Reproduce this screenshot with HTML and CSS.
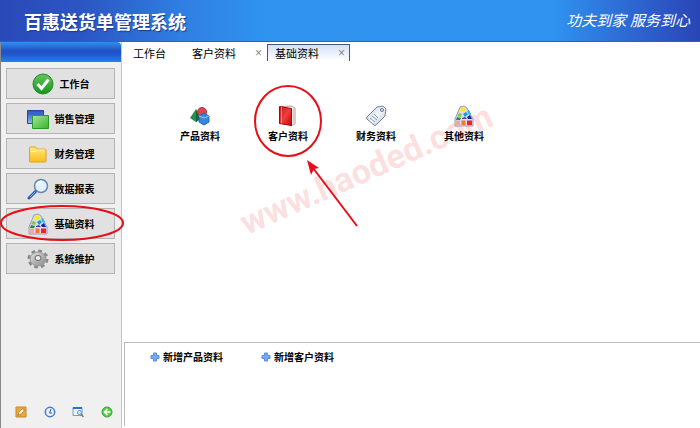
FILE: index.html
```html
<!DOCTYPE html>
<html lang="zh-CN">
<head>
    <meta charset="UTF-8">
    <meta name="viewport" content="width=device-width, initial-scale=1.0">
    <title>百惠送货单管理系统</title>
    <link rel="stylesheet" href="styles.css">
</head>
<body>
    <!-- shared gradients and icons -->
    <svg class="defs" width="0" height="0" aria-hidden="true">
        <defs>
            <linearGradient id="green" x1="0" y1="0" x2="0" y2="1"><stop offset="0" stop-color="#5fc95a"/><stop offset="1" stop-color="#159519"/></linearGradient>
            <linearGradient id="lime" x1="0" y1="0" x2="1" y2="1"><stop offset="0" stop-color="#a7e69b"/><stop offset="1" stop-color="#34b42c"/></linearGradient>
            <linearGradient id="blue" x1="0" y1="0" x2="0" y2="1"><stop offset="0" stop-color="#2b50b8"/><stop offset="1" stop-color="#8db9f5"/></linearGradient>
            <linearGradient id="yellow" x1="0" y1="0" x2="0" y2="1"><stop offset="0" stop-color="#ffe880"/><stop offset="1" stop-color="#f8bd1c"/></linearGradient>
            <linearGradient id="red" x1="0" y1="0" x2="1" y2="1"><stop offset="0" stop-color="#d3141a"/><stop offset="0.5" stop-color="#ec3f3f"/><stop offset="1" stop-color="#c50005"/></linearGradient>
            <linearGradient id="steel" x1="0" y1="0" x2="1" y2="1"><stop offset="0" stop-color="#b3c3dc"/><stop offset="0.5" stop-color="#f3f7fc"/><stop offset="1" stop-color="#aebdd2"/></linearGradient>
            <linearGradient id="gray" x1="0" y1="0" x2="1" y2="1"><stop offset="0" stop-color="#e2e2e2"/><stop offset="1" stop-color="#888"/></linearGradient>
            <symbol id="palette" viewBox="0 0 22 22">
                <path d="M7 2 11 1l3 2 6 11v7H2v-7z" fill="#d8dcef" stroke="#9a9dba"/>
                <path d="M8 3l3-1 2 3-2 2-4-1z" fill="#f8ec15"/>
                <path d="M6 8l3 1-1 3-4-1z" fill="#8ac83a"/>
                <path d="M10 9l3-2 2 2-3 3z" fill="#1897da"/>
                <path d="M14 6l2-1 2 4-2 1z" fill="#2ac4c9"/>
                <path d="M4 12l4 1-1 2H3z" fill="#16944a"/>
                <path d="M9 13l3-1 2 2H9z" fill="#6135b3"/>
                <path d="M14 12l3-2 2 4h-4z" fill="#1526a0"/>
                <path d="M3 15.500h4V20H3z" fill="#f6a78c"/>
                <path d="M8.500 15.500h4V20h-4z" fill="#f47a22"/>
                <path d="M14 15.500h5V20h-5z" fill="#f02519"/>
            </symbol>
            <symbol id="plus" viewBox="0 0 10 10">
                <path d="M3.500 1h3v2.500H9v3H6.500V9h-3V6.500H1v-3h2.500z" fill="#75a9f2" stroke="#5a8bdc"/>
            </symbol>
        </defs>
    </svg>

    <header class="header">
        <h1>百惠送货单管理系统</h1>
        <p class="slogan">功夫到家 服务到心</p>
    </header>

    <div class="layout">
        <aside class="sidebar">
            <div class="sidebar-top"></div>
            <nav class="menu">
                <button type="button">
                    <svg class="icon" viewBox="0 0 22 22"><circle cx="11" cy="11" r="10" fill="url(#green)" stroke="#23882a"/><path d="M5.500 11l4 4.500 7-9" fill="none" stroke="#fff" stroke-width="3"/></svg>
                    工作台
                </button>
                <button type="button">
                    <svg class="icon" viewBox="0 0 22 22"><path d="M.5 2.500h16v13H.5z" fill="url(#blue)" stroke="#2545a5"/><path d="M2 4h13v3H2z" fill="#3865cc"/><path d="M5.500 7.500h16v13h-16z" fill="url(#lime)" stroke="#289a27"/></svg>
                    销售管理
                </button>
                <button type="button">
                    <svg class="icon" viewBox="0 0 22 22"><path d="M2.500 18V5q0-1 1-1h5l2 2h7q1.500 0 1.500 1v11q0 1-1 1H3.500q-1 0-1-1z" fill="url(#yellow)" stroke="#e0a21a"/><path d="M4 8.500h5l2-1.500h7" fill="none" stroke="#fff3ad"/></svg>
                    财务管理
                </button>
                <button type="button">
                    <svg class="icon" viewBox="0 0 22 22"><path d="M9 13l-7 7" stroke="#315fab" stroke-width="3" stroke-linecap="round"/><path d="M8 14l-5 5" stroke="#7db1ed"/><circle cx="14" cy="8" r="6.500" fill="#e3f1ff" stroke="#6487b5" stroke-width="1.500"/><path d="M10 7q1-4 5-3" fill="none" stroke="#fff" stroke-width="2"/></svg>
                    数据报表
                </button>
                <button type="button">
                    <svg class="icon"><use href="#palette"/></svg>
                    基础资料
                </button>
                <button type="button">
                    <svg class="icon" viewBox="0 0 22 22"><ellipse cx="11" cy="11" rx="9" ry="8" fill="none" stroke="#888" stroke-width="3" stroke-dasharray="3.700 2.975"/><ellipse cx="11" cy="11" rx="8" ry="7" fill="url(#gray)" stroke="#999"/><ellipse cx="11" cy="10" rx="3" ry="2.500" fill="#eee" stroke="#666"/></svg>
                    系统维护
                </button>
            </nav>
            <div class="tools">
                <button type="button" aria-label="编辑"><svg viewBox="0 0 12 12"><path d="M1 1h10v10H1z" fill="#e8a83d" stroke="#c98824"/><path d="M3 9.500 4 6l3-3h2v2L6 8z" fill="#fff0c9" stroke="#a46a12" stroke-width=".6"/></svg></button>
                <button type="button" aria-label="时间"><svg viewBox="0 0 12 12"><circle cx="6" cy="6" r="4.700" fill="#e7f0ff" stroke="#477acb" stroke-width="1.500"/><path d="M7 3 5.500 7H8" fill="none" stroke="#315fb8"/></svg></button>
                <button type="button" aria-label="查找"><svg viewBox="0 0 12 12"><path d="M1 1.500h9v8H1z" fill="#eaf3ff" stroke="#6f9ee0"/><path d="M1 1h9v2H1z" fill="#326fc6"/><circle cx="7.500" cy="6.500" r="2" fill="#d4e9ff" stroke="#6b91c5"/><path d="M9 8l2.500 3" stroke="#92793f" stroke-width="1.500"/></svg></button>
                <button type="button" aria-label="返回"><svg viewBox="0 0 12 12"><circle cx="6" cy="6" r="5" fill="#56cb45" stroke="#34a52d"/><path d="M9.500 6H4M6.500 3l-3 3 3 3" fill="none" stroke="#fff" stroke-width="1.700"/></svg></button>
            </div>
        </aside>

        <main class="main">
            <div class="tabs">
                <div class="tab tab-home"><a href="#">工作台</a></div>
                <div class="tab"><a href="#">客户资料</a><button type="button" class="close" aria-label="关闭">×</button></div>
                <div class="tab active"><a href="#">基础资料</a><button type="button" class="close" aria-label="关闭">×</button></div>
            </div>

            <div class="tiles">
                <a href="#">
                    <svg class="icon" viewBox="0 0 22 22"><circle cx="13" cy="7" r="4.500" fill="#dc4650" stroke="#b92e3a"/><path d="M7 4 1 13l6 4 4-3z" fill="#21924c"/><path d="M7 4v13l4-3z" fill="#126835"/><path d="M10 11l5-3 5 3v6l-5 3-5-3z" fill="#3487dc" stroke="#2467b8"/><path d="M10 11l5 2 5-2" fill="none" stroke="#9acbfa"/></svg>
                    产品资料
                </a>
                <a href="#">
                    <svg class="icon" viewBox="0 0 22 22"><path d="M4 1.500l10-.5 4 2v16l-4 2z" fill="#f8f4f4" stroke="#b99"/><path d="M16.500 4v14" stroke="#c9b8b8" stroke-width=".7"/><path d="M2.500 1.500l12 2v17l-12-2z" fill="url(#red)" stroke="#af0007"/><path d="M4.500 2v16.500" stroke="#f08a85"/></svg>
                    客户资料
                </a>
                <a href="#">
                    <svg class="icon" viewBox="0 0 22 22"><path d="M2 12 12 2l6-1 3 3-1 7-9 9q-1 1-2 0l-7-6q-1-1 0-2z" fill="url(#steel)" stroke="#71829c"/><circle cx="17" cy="5" r="1.500" fill="#fff" stroke="#586a86"/><path d="M5 13l5 4M7 11l5 4M9 9l4 4" stroke="#8595ad"/></svg>
                    财务资料
                </a>
                <a href="#">
                    <svg class="icon"><use href="#palette"/></svg>
                    其他资料
                </a>
            </div>

            <div class="shortcuts">
                <a href="#"><svg><use href="#plus"/></svg>新增产品资料</a>
                <a href="#"><svg><use href="#plus"/></svg>新增客户资料</a>
            </div>
        </main>
    </div>

    <div class="watermark">www.haoded.com</div>
    <svg class="marks" width="400" height="250" viewBox="0 0 400 250" aria-hidden="true">
        <g fill="none" stroke="#e60f18" stroke-width="2">
            <ellipse cx="62" cy="223" rx="61" ry="17"/>
            <ellipse cx="288" cy="121" rx="33" ry="35"/>
            <path d="M357 226 313 168"/>
        </g>
        <path d="M307 160l12 8-5 1-3 6z" fill="#e60f18"/>
    </svg>
</body>
</html>
```

FILE: styles.css
```css
* {
    box-sizing: border-box;
}
body {
    position: relative;
    z-index: 0;
    display: flex;
    flex-direction: column;
    min-height: 100vh;
    margin: 0;
    background-color: #fff;
    color: #000;
    font-family: "Noto Sans CJK SC", sans-serif;
    font-size: 10px;
    line-height: 14px;
}
a {
    color: inherit;
    text-decoration: none;
}
button {
    padding: 0;
    border: none;
    background: none;
    color: inherit;
    font: inherit;
    cursor: pointer;
}
.defs {
    position: absolute;
}
.header {
    display: flex;
    align-items: center;
    justify-content: space-between;
    height: 42px;
    padding: 0 10px 0 24px;
    border-bottom: 1px solid #1d62d8;
    background: linear-gradient(to right, #2a49b8 0%, #2c56c4 12%, #2f7fe2 26%, #3093f0 38%, #3093f0 79%, #2d64d0 91%, #2a45b5 100%);
    color: #fff;
}
.header h1 {
    margin: 0;
    font-size: 18px;
    line-height: 24px;
    text-shadow: 1px 1px 1px #1c3a94;
}
.slogan {
    margin: 0;
    font-family: "Liberation Serif", "Noto Sans CJK SC", serif;
    font-size: 15px;
    font-style: italic;
    line-height: 20px;
}
.layout {
    display: flex;
    flex: 1;
}
.sidebar {
    display: flex;
    flex-direction: column;
    width: 122px;
    border-left: 1px solid #888;
    border-right: 1px solid #a9cdf0;
    background-color: #f0f0f0;
}
.sidebar-top {
    height: 20px;
    border-top-right-radius: 4px;
    background: linear-gradient(#2f8ff0, #2350c5 45%, #2254ca 60%, #1b86f3);
}
.menu {
    display: flex;
    flex-direction: column;
    gap: 4px;
    padding: 6px 6px 0 5px;
}
.menu button {
    display: flex;
    align-items: center;
    justify-content: center;
    gap: 6px;
    height: 31px;
    border: 1px solid #b4b4b4;
    background-color: #e1e1e1;
    font-weight: bold;
}
.icon {
    width: 22px;
    height: 22px;
}
.tools {
    display: flex;
    justify-content: space-between;
    margin-top: auto;
    padding: 0 8px 10px 14px;
}
.tools button,
.tools svg {
    display: block;
    width: 12px;
    height: 12px;
}
.main {
    display: flex;
    flex: 1;
    flex-direction: column;
    padding-left: 2px;
}
.tabs {
    display: flex;
    padding-top: 2px;
    font-size: 11px;
}
.tab {
    display: flex;
    align-items: center;
    justify-content: space-between;
    width: 83px;
    height: 17px;
    padding: 0 4px 0 7px;
    border: 1px solid transparent;
    border-bottom: none;
}
.tab-home {
    width: 60px;
    padding-left: 8px;
}
.tab.active {
    border-color: #4d5566;
    background: linear-gradient(#d5e0f6, #fff);
}
.close {
    color: #888;
    font-family: "Liberation Sans", sans-serif;
    font-size: 12px;
}
.tiles {
    display: flex;
    flex: 1;
    padding: 44px 0 0 32px;
}
.tiles a {
    display: flex;
    flex-direction: column;
    align-items: center;
    gap: 2px;
    width: 88px;
    height: 38px;
    font-weight: bold;
}
.shortcuts {
    display: flex;
    gap: 38px;
    height: 84px;
    margin-bottom: 2px;
    padding: 6px 0 0 25px;
    border-top: 1px solid #bbb;
    border-left: 1px solid #bbb;
}
.shortcuts a {
    display: flex;
    align-items: center;
    gap: 3px;
    height: 16px;
    font-weight: bold;
}
.shortcuts svg {
    width: 10px;
    height: 10px;
}
.watermark {
    position: absolute;
    z-index: -1;
    top: 148px;
    left: 230px;
    color: rgba(240, 60, 60, 0.18);
    font-family: Roboto, sans-serif;
    font-size: 34px;
    font-weight: bold;
    line-height: 42px;
    transform: rotate(-24deg);
    pointer-events: none;
}
.marks {
    position: absolute;
    top: 0;
    left: 0;
    pointer-events: none;
}
```
